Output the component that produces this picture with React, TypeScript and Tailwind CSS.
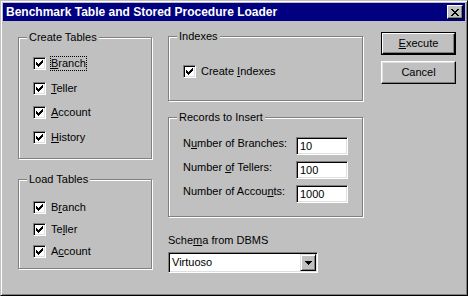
import type { ReactNode } from "react";

const CheckBox = () => (
  <span className="flex h-[13px] w-[13px] shrink-0 items-center justify-center border border-t-[#808080] border-l-[#808080] border-b-white border-r-white bg-white shadow-[inset_1px_1px_0_#000,inset_-1px_-1px_0_#dfdfdf]">
    <svg width="7" height="7" viewBox="0 0 7 7" shapeRendering="crispEdges">
      <path d="M0 2h1v3H0zM1 3h1v3H1zM2 4h1v3H2zM3 3h1v3H3zM4 2h1v3H4zM5 1h1v3H5zM6 0h1v3H6z" fill="#000" />
    </svg>
  </span>
);

const CheckRow = ({ children, focused }: { children: ReactNode; focused?: boolean }) => (
  <div className="flex h-[13px] items-center">
    <CheckBox />
    <span
      className={
        focused
          ? "ml-[4px] border border-dotted border-black leading-[13px]"
          : "ml-[4px] border border-transparent leading-[13px]"
      }
    >
      {children}
    </span>
  </div>
);

const Group = ({ title, className, children }: { title: string; className: string; children: ReactNode }) => (
  <div className={"relative border border-[#808080] shadow-[inset_1px_1px_0_#fff,1px_1px_0_#fff] " + className}>
    <span className="absolute -top-[8px] left-[8px] bg-[#c0c0c0] px-[2px] leading-[14px]">{title}</span>
    {children}
  </div>
);

const Field = ({ value }: { value: string }) => (
  <div className="flex h-[18px] w-[52px] items-center border border-t-[#808080] border-l-[#808080] border-b-white border-r-white bg-white pl-[3px] shadow-[inset_1px_1px_0_#000,inset_-1px_-1px_0_#dfdfdf]">
    {value}
  </div>
);

const U = ({ children }: { children: ReactNode }) => <span className="underline underline-offset-[1px]">{children}</span>;

export default function App() {
  return (
    <div className="h-[296px] w-[468px] border border-t-[#c0c0c0] border-l-[#c0c0c0] border-r-black border-b-black bg-[#c0c0c0] p-[2px] text-[11px] text-black shadow-[inset_1px_1px_0_#fff,inset_-1px_-1px_0_#808080] [font-family:'Liberation_Sans',Arial,sans-serif]">
      {/* title bar */}
      <div className="flex h-[18px] items-center justify-between bg-[#000080] pl-[3px] pr-[2px]">
        <span className="text-[12px] font-bold text-white">Benchmark Table and Stored Procedure Loader</span>
        <div className="flex h-[14px] w-[16px] items-center justify-center border border-t-white border-l-white border-b-black border-r-black bg-[#c0c0c0] shadow-[inset_-1px_-1px_0_#808080]">
          <svg width="8" height="7" viewBox="0 0 8 7" shapeRendering="crispEdges">
            <path d="M0 0h2v1H0zM6 0h2v1H6zM1 1h2v1H1zM5 1h2v1H5zM2 2h4v1H2zM3 3h2v1H3zM2 4h4v1H2zM1 5h2v1H1zM5 5h2v1H5zM0 6h2v1H0zM6 6h2v1H6z" fill="#000" />
          </svg>
        </div>
      </div>

      <div className="flex pl-[15px]">
        {/* left column */}
        <div className="mt-[16px] w-[134px]">
          <Group title="Create Tables" className="h-[122px]">
            <div className="flex flex-col gap-[11.5px] pl-[14px] pt-[19px]">
              <CheckRow focused>
                <U>B</U>ranch
              </CheckRow>
              <CheckRow>
                <U>T</U>eller
              </CheckRow>
              <CheckRow>
                <U>A</U>ccount
              </CheckRow>
              <CheckRow>
                <U>H</U>istory
              </CheckRow>
            </div>
          </Group>
          <Group title="Load Tables" className="mt-[20px] h-[90px]">
            <div className="flex flex-col gap-[9px] pl-[14px] pt-[21px]">
              <CheckRow>
                B<U>r</U>anch
              </CheckRow>
              <CheckRow>
                Te<U>l</U>ler
              </CheckRow>
              <CheckRow>
                A<U>c</U>count
              </CheckRow>
            </div>
          </Group>
        </div>

        {/* middle column */}
        <div className="ml-[16px] mt-[15px] w-[195px]">
          <Group title="Indexes" className="h-[65px]">
            <div className="pl-[14px] pt-[28px]">
              <CheckRow>
                Create <U>I</U>ndexes
              </CheckRow>
            </div>
          </Group>
          <Group title="Records to Insert" className="mt-[16px] h-[100px]">
            <div className="flex flex-col gap-[6px] pl-[14px] pt-[19px]">
              <div className="flex items-start">
                <span className="w-[113px] leading-[13px]">
                  N<U>u</U>mber of Branches:
                </span>
                <Field value="10" />
              </div>
              <div className="flex items-start">
                <span className="w-[113px] leading-[13px]">
                  Number <U>o</U>f Tellers:
                </span>
                <Field value="100" />
              </div>
              <div className="flex items-start">
                <span className="w-[113px] leading-[13px]">
                  Number of Accou<U>n</U>ts:
                </span>
                <Field value="1000" />
              </div>
            </div>
          </Group>
          <div className="mt-[17px] leading-[13px]">
            Sche<U>m</U>a from DBMS
          </div>
          <div className="mt-[5px] flex h-[21px] w-[150px] items-center justify-between border border-t-[#808080] border-l-[#808080] border-b-white border-r-white bg-white shadow-[inset_1px_1px_0_#000,inset_-1px_-1px_0_#dfdfdf]">
            <span className="pl-[3px]">Virtuoso</span>
            <div className="mr-[1px] flex h-[17px] w-[16px] items-center justify-center border border-t-[#dfdfdf] border-l-[#dfdfdf] border-b-black border-r-black bg-[#c0c0c0] shadow-[inset_1px_1px_0_#fff,inset_-1px_-1px_0_#808080]">
              <svg width="7" height="4" viewBox="0 0 7 4" shapeRendering="crispEdges">
                <path d="M0 0h7v1H0zM1 1h5v1H1zM2 2h3v1H2zM3 3h1v1H3z" fill="#000" />
              </svg>
            </div>
          </div>
        </div>

        {/* buttons */}
        <div className="ml-[18px] mt-[11px] flex flex-col gap-[6px]">
          <div className="h-[23px] w-[75px] border border-black">
            <div className="flex h-full w-full items-center justify-center border border-t-white border-l-white border-b-black border-r-black shadow-[inset_-1px_-1px_0_#808080]">
              <span>
                <U>E</U>xecute
              </span>
            </div>
          </div>
          <div className="flex h-[23px] w-[75px] items-center justify-center border border-t-white border-l-white border-b-black border-r-black shadow-[inset_-1px_-1px_0_#808080,inset_1px_1px_0_#dfdfdf]">
            Cancel
          </div>
        </div>
      </div>
    </div>
  );
}
